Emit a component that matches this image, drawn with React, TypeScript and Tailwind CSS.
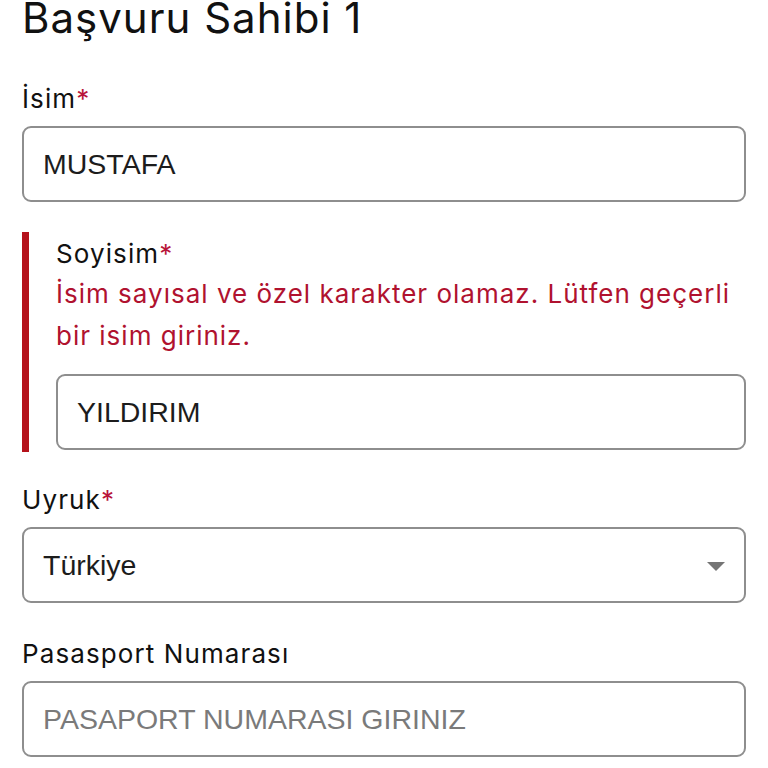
import React from "react";

const labelFont = { fontFamily: "Inter, 'Noto Sans', sans-serif" };
const inputFont = { fontFamily: "'Liberation Sans', Arial, sans-serif" };

function Label({ text, required }: { text: string; required?: boolean }) {
  return (
    <div
      className="text-[26px] leading-[32px] tracking-[1.1px] text-[#111111] mb-[11px]"
      style={labelFont}
    >
      {text}
      {required && <span className="text-[#b8143a]">*</span>}
    </div>
  );
}

function Box({ children }: { children: React.ReactNode }) {
  return (
    <div
      className="h-[76px] rounded-[9px] border-2 border-[#8e8e8e] bg-white px-[19px] flex items-center text-[28.5px] text-[#1c1c1c]"
      style={inputFont}
    >
      {children}
    </div>
  );
}

export default function App() {
  return (
    <div className="min-h-[768px] bg-white px-[22px] overflow-hidden">
      <h1
        className="text-[42px] leading-[48px] tracking-[1px] -mt-[6px] mb-[41px] text-[#111111] font-normal"
        style={labelFont}
      >
        Başvuru Sahibi 1
      </h1>

      {/* İsim */}
      <div>
        <Label text="İsim" required />
        <Box>MUSTAFA</Box>
      </div>

      {/* Soyisim with error */}
      <div className="mt-[30px] flex">
        <div className="w-[7px] shrink-0 bg-[#b5121b]" />
        <div className="flex-1 pl-[27px] pt-[6px] pb-[2px]">
          <div
            className="text-[26px] leading-[32px] tracking-[1.1px] text-[#111111]"
            style={labelFont}
          >
            Soyisim<span className="text-[#b8143a]">*</span>
          </div>
          <p
            className="mt-[3px] mb-[17px] text-[26px] leading-[42px] tracking-[1px] text-[#b0122f]"
            style={labelFont}
          >
            İsim sayısal ve özel karakter olamaz. Lütfen geçerli bir isim giriniz.
          </p>
          <Box>YILDIRIM</Box>
        </div>
      </div>

      {/* Uyruk */}
      <div className="mt-[32px]">
        <Label text="Uyruk" required />
        <Box>
          <span className="flex-1">Türkiye</span>
          <svg width="18" height="10" viewBox="0 0 18 10" className="mt-[3px]">
            <path d="M0 0 L18 0 L9 9 Z" fill="#757575" />
          </svg>
        </Box>
      </div>

      {/* Pasaport */}
      <div className="mt-[35px]">
        <Label text="Pasasport Numarası" />
        <Box>
          <span className="text-[#7a7a7a]">PASAPORT NUMARASI GIRINIZ</span>
        </Box>
      </div>
    </div>
  );
}
